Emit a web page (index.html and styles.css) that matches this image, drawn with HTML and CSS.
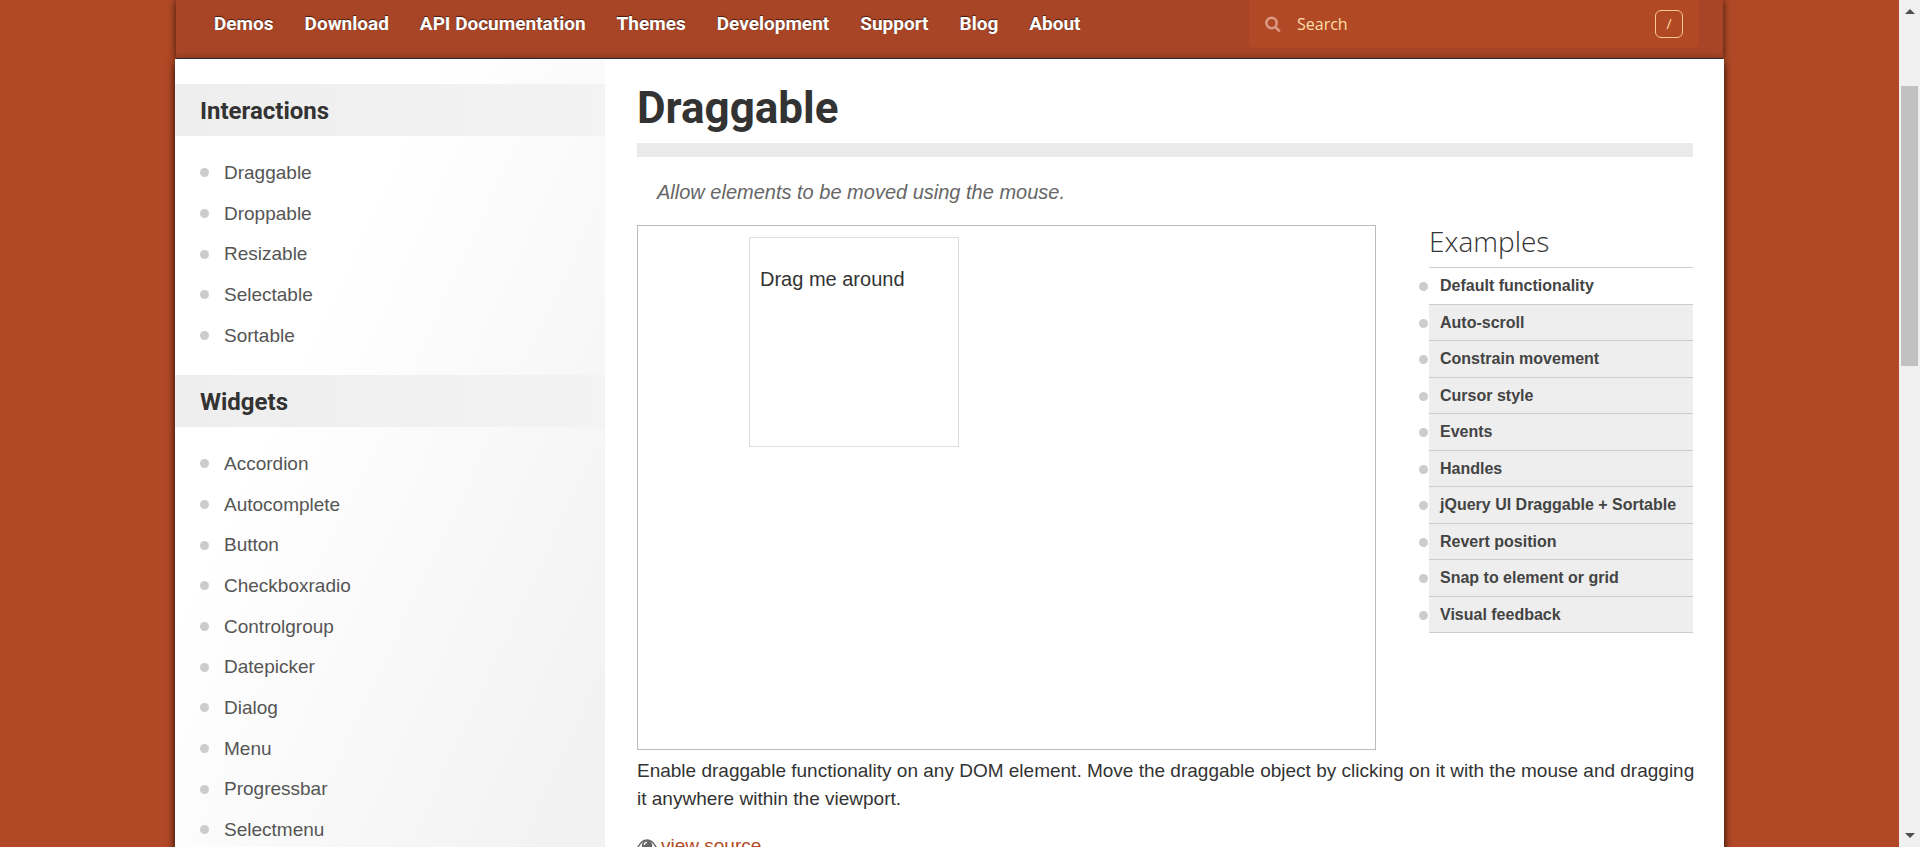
FILE: index.html
```html
<!DOCTYPE html>
<html lang="en">
<head>
<meta charset="utf-8">
<title>Draggable | jQuery UI</title>
<link rel="stylesheet" href="styles.css">
</head>
<body>
<div class="window">
  <div class="viewport">
    <div class="container">
      <header class="header">
        <nav class="nav">
          <a href="#">Demos</a>
          <a href="#">Download</a>
          <a href="#">API Documentation</a>
          <a href="#">Themes</a>
          <a href="#">Development</a>
          <a href="#">Support</a>
          <a href="#">Blog</a>
          <a href="#">About</a>
        </nav>
        <form class="search">
          <svg class="search-icon" viewBox="0 0 16 16" aria-hidden="true"><circle cx="6.500" cy="7" r="5.200"/><path d="M10.300 11 14.800 15.300"/></svg>
          <input class="search-input" type="search" placeholder="Search" aria-label="Search">
          <kbd class="key">/</kbd>
        </form>
      </header>
      <div class="content">
        <aside class="sidebar">
          <h3 class="side-title">Interactions</h3>
          <ul class="side-list">
            <li><a href="#">Draggable</a></li>
            <li><a href="#">Droppable</a></li>
            <li><a href="#">Resizable</a></li>
            <li><a href="#">Selectable</a></li>
            <li><a href="#">Sortable</a></li>
          </ul>
          <h3 class="side-title">Widgets</h3>
          <ul class="side-list">
            <li><a href="#">Accordion</a></li>
            <li><a href="#">Autocomplete</a></li>
            <li><a href="#">Button</a></li>
            <li><a href="#">Checkboxradio</a></li>
            <li><a href="#">Controlgroup</a></li>
            <li><a href="#">Datepicker</a></li>
            <li><a href="#">Dialog</a></li>
            <li><a href="#">Menu</a></li>
            <li><a href="#">Progressbar</a></li>
            <li><a href="#">Selectmenu</a></li>
          </ul>
        </aside>
        <main class="main">
          <h1 class="title">Draggable</h1>
          <p class="intro">Allow elements to be moved using the mouse.</p>
          <div class="demo-row">
            <section class="demo">
              <div class="draggable">Drag me around</div>
            </section>
            <section class="examples">
              <h2 class="examples-title">Examples</h2>
              <ul class="examples-list">
                <li class="active"><a href="#">Default functionality</a></li>
                <li><a href="#">Auto-scroll</a></li>
                <li><a href="#">Constrain movement</a></li>
                <li><a href="#">Cursor style</a></li>
                <li><a href="#">Events</a></li>
                <li><a href="#">Handles</a></li>
                <li><a href="#">jQuery UI Draggable + Sortable</a></li>
                <li><a href="#">Revert position</a></li>
                <li><a href="#">Snap to element or grid</a></li>
                <li><a href="#">Visual feedback</a></li>
              </ul>
            </section>
          </div>
          <p class="description">Enable draggable functionality on any DOM element. Move the draggable object by clicking on it with the mouse and dragging it anywhere within the viewport.</p>
          <a class="view-source" href="#"><svg class="eye" viewBox="0 0 20 14" aria-hidden="true"><path d="M1 8C4 2.500 7 1 10 1s6 1.500 9 7c-3 4-6 5-9 5S4 12 1 8z" fill="none" stroke="#666" stroke-width="1.500"/><circle cx="10" cy="6.500" r="5.200" fill="#666"/><path d="M7.300 6a2.800 2.800 0 0 1 2.700-2.700" fill="none" stroke="#fff" stroke-width="1.200"/></svg>view source</a>
        </main>
      </div>
    </div>
  </div>
  <div class="scrollbar" aria-hidden="true">
    <span class="arrow arrow-up"></span>
    <span class="thumb"></span>
    <span class="arrow arrow-down"></span>
  </div>
</div>
</body>
</html>
```
FILE: styles.css
```css
* { box-sizing: border-box; }
body {
  margin: 0;
  background: #b24926;
  color: #333;
  font-family: "Liberation Sans", Arial, sans-serif;
  font-size: 19px;
}
a { color: inherit; text-decoration: none; }
h1, h2, h3, p, ul { margin: 0; padding: 0; }
ul { list-style: none; }

.window { display: flex; height: 100vh; overflow: hidden; }
.viewport { flex: 1; min-width: 0; }
.container { max-width: 1549px; margin: 0 auto; }

.header {
  display: flex;
  justify-content: space-between;
  height: 59px;
  margin: 0 1px;
  padding: 0 24px 0 38px;
  background: linear-gradient(#a84527 52px, #9c3f22);
  border-bottom: 1px solid #333;
  box-shadow: 0 0 8px rgba(0, 0, 0, .7);
}
.nav {
  display: flex;
  gap: 31px;
  height: 48px;
  align-items: center;
  color: #fff;
  font: bold 19px/48px Roboto, sans-serif;
  text-shadow: 0 -1px 1px rgba(0, 0, 0, .6);
}
.search {
  display: flex;
  align-items: center;
  gap: 16px;
  width: 450px;
  height: 48px;
  padding: 0 16px;
  background: #b24926;
  border-radius: 0 0 5px 5px;
}
.search-icon { width: 16px; height: 16px; fill: none; stroke: #dd9a84; stroke-width: 2.5; }
.search-input {
  flex: 1;
  min-width: 0;
  padding: 0;
  border: 0;
  outline: 0;
  background: none;
  color: #ffdfa5;
  font: 16px "Open Sans", sans-serif;
}
.search-input::placeholder { color: #ffdfa5; opacity: 1; }
.key {
  width: 28px;
  height: 28px;
  border: 1px solid #fbc98b;
  border-radius: 6px;
  color: #ffdfa5;
  font: 14px/26px "Open Sans", sans-serif;
  text-align: center;
}

.content {
  display: flex;
  min-height: 100vh;
  background: #fff;
  box-shadow: 0 4px 8px rgba(0, 0, 0, .9);
}
.sidebar {
  width: 430px;
  padding-top: 25px;
  background: linear-gradient(115deg, #fff 32%, #f2f2f2 90%);
}
.side-title {
  height: 52px;
  padding: 1px 0 0 25px;
  background: linear-gradient(90deg, #eee, #f3f3f3);
  font: bold 24px/52px Roboto, sans-serif;
}
.side-list { padding: 16px 25px 19px; color: #555; }
.side-list li { display: flex; align-items: center; gap: 15px; height: 41px; }
.side-list li:nth-child(3n) { height: 40px; }
.side-list li::before,
.examples-list li::before {
  content: "";
  width: 9px;
  height: 9px;
  border-radius: 50%;
  background: #ccc;
}

.main { flex: 1; min-width: 0; padding: 19px 31px 0 32px; }
.title {
  padding-bottom: 5px;
  border-bottom: 14px solid #eaeaea;
  font: bold 44px/60px Roboto, sans-serif;
}
.intro { padding: 22px 20px 20px; color: #666; font-size: 20px; font-style: italic; line-height: 26px; }
.demo-row { display: flex; gap: 53px; }
.demo { flex: 1; height: 525px; padding: 11px 111px; border: 1px solid #bbb; }
.draggable {
  width: 210px;
  height: 210px;
  padding: 28px 10px;
  border: 1px solid #ddd;
  font-size: 20px;
  line-height: 26px;
}
.examples { width: 264px; }
.examples-title { height: 42px; font: 300 28px/32px "Open Sans", sans-serif; }
.examples-list {
  border-top: 1px solid #ccc;
  color: #444;
  font-size: 16px;
  font-weight: bold;
}
.examples-list li {
  display: flex;
  align-items: center;
  height: 37px;
  margin-left: -10px;
}
.examples-list li:nth-child(even) { height: 36px; }
.examples-list a {
  flex: 1;
  display: flex;
  align-items: center;
  align-self: stretch;
  margin-left: 1px;
  padding-left: 11px;
  background: #eee;
  border-bottom: 1px solid #ccc;
}
.examples-list .active a { background: #fff; }
.description { margin: 7px -8px 20px 0; line-height: 28px; }
.view-source { display: flex; align-items: center; gap: 4px; color: #b24926; line-height: 26px; }
.eye { width: 20px; height: 14px; }

.scrollbar {
  display: flex;
  flex-direction: column;
  align-items: center;
  width: 21px;
  padding: 9px 0;
  background: #f0f0f0;
}
.arrow { border: 5px solid transparent; border-top: 0; border-bottom: 5px solid #505050; }
.arrow-down { border-top: 5px solid #505050; border-bottom: 0; margin-top: auto; }
.thumb { width: 17px; height: 33vh; margin-top: 72px; background: #c1c1c1; }
```
